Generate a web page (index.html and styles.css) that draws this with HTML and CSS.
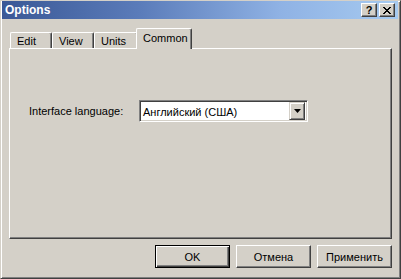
FILE: index.html
```html
<!DOCTYPE html>
<html lang="en">

<head>
    <meta charset="UTF-8">
    <meta name="viewport" content="width=device-width, initial-scale=1.0">
    <title>Options</title>
    <link rel="stylesheet" href="styles.css">
</head>

<body>
    <div class="window">
        <div class="titlebar">
            <span class="title">Options</span>
            <div class="caption-btns">
                <button class="cap">?</button>
                <button class="cap">
                    <svg width="8" height="7" viewBox="0 0 8 7">
                        <path d="M0 0h2v1h1v1h2v-1h1v-1h2v1h-1v1h-1v1h-1v1h1v1h1v1h1v1h-2v-1h-1v-1h-2v1h-1v1h-2v-1h1v-1h1v-1h1v-1h-1v-1h-1v-1h-1z" fill="#000"/>
                    </svg>
                </button>
            </div>
        </div>

        <div class="content">
            <div class="tabs">
                <div class="tab">Edit</div>
                <div class="tab">View</div>
                <div class="tab wide">Units</div>
                <div class="tab active">Common</div>
            </div>

            <div class="panel">
                <div class="row">
                    <label class="label">Interface language:</label>
                    <div class="combo">
                        <span class="combo-text">Английский (США)</span>
                        <span class="drop">
                            <svg width="7" height="4" viewBox="0 0 7 4">
                                <path d="M0 0h7l-3.5 4z" fill="#000"/>
                            </svg>
                        </span>
                    </div>
                </div>
            </div>

            <div class="buttons">
                <button class="btn default">OK</button>
                <button class="btn">Отмена</button>
                <button class="btn">Применить</button>
            </div>
        </div>
    </div>
</body>

</html>
```

FILE: styles.css
```css
body {
    margin: 0;
    background-color: #d4d0c8;
    font-family: "Liberation Sans", Arial, sans-serif;
    font-size: 11px;
    color: #000;
}

.window {
    width: 401px;
    height: 279px;
    box-sizing: border-box;
    background-color: #d4d0c8;
    border-top: 1px solid #d4d0c8;
    border-left: 1px solid #d4d0c8;
    border-right: 1px solid #404040;
    border-bottom: 1px solid #404040;
    box-shadow: inset 1px 1px #fff, inset -1px -1px #808080;
    padding: 0 2px 2px 1px;
    display: flex;
    flex-direction: column;
}

.titlebar {
    height: 18px;
    display: flex;
    align-items: center;
    justify-content: space-between;
    background: linear-gradient(to right, #3a5896, #5b7cba 35%, #8fb2e4 70%, #a6caf0);
    padding: 0 3px 0 3px;
}

.title {
    color: #fff;
    font-weight: bold;
    font-size: 12px;
    font-family: "Liberation Sans", sans-serif;
}

.caption-btns {
    display: flex;
    gap: 2px;
}

.cap {
    width: 16px;
    height: 14px;
    padding: 0;
    margin: 0;
    background-color: #d4d0c8;
    border-top: 1px solid #fff;
    border-left: 1px solid #fff;
    border-right: 1px solid #404040;
    border-bottom: 1px solid #404040;
    box-shadow: inset -1px -1px #808080;
    font-family: "Liberation Sans", sans-serif;
    font-weight: bold;
    font-size: 11px;
    line-height: 11px;
    display: flex;
    align-items: center;
    justify-content: center;
}

.content {
    flex: 1;
    padding: 9px 6px 0 7px;
    display: flex;
    flex-direction: column;
}

.tabs {
    display: flex;
    align-items: flex-end;
    padding-left: 1px;
    position: relative;
    z-index: 1;
}

.tab {
    width: 42px;
    height: 16px;
    box-sizing: border-box;
    padding: 0 0 0 6px;
    border-top: 1px solid #fff;
    border-left: 1px solid #fff;
    border-right: 1px solid #404040;
    box-shadow: inset -1px 0 #808080;
    border-radius: 2px 2px 0 0;
    display: flex;
    align-items: center;
    background-color: #d4d0c8;
}

.tab.wide {
    width: 44px;
}

.tab.active {
    width: 56px;
    height: 21px;
    margin: 0 0 -1px -2px;
    padding: 3px 0 0 6px;
    align-items: flex-start;
}

.panel {
    height: 191px;
    box-sizing: border-box;
    border-top: 1px solid #fff;
    border-left: 1px solid #fff;
    border-right: 1px solid #404040;
    border-bottom: 1px solid #404040;
    box-shadow: inset -1px -1px #808080;
    padding: 51px 0 0 19px;
}

.row {
    display: flex;
    align-items: center;
    gap: 19px;
}

.label {
    width: 91px;
    white-space: nowrap;
}

.combo {
    width: 169px;
    height: 22px;
    box-sizing: border-box;
    background-color: #fff;
    border-top: 1px solid #808080;
    border-left: 1px solid #808080;
    border-right: 1px solid #fff;
    border-bottom: 1px solid #fff;
    box-shadow: inset 1px 1px #404040, inset -1px -1px #d4d0c8;
    display: flex;
    align-items: center;
    justify-content: space-between;
    padding: 2px 2px 2px 3px;
}

.combo-text {
    padding-top: 1px;
}

.drop {
    width: 16px;
    height: 18px;
    box-sizing: border-box;
    background-color: #d4d0c8;
    border-top: 1px solid #d4d0c8;
    border-left: 1px solid #d4d0c8;
    border-right: 1px solid #404040;
    border-bottom: 1px solid #404040;
    box-shadow: inset 1px 1px #fff, inset -1px -1px #808080;
    display: flex;
    align-items: center;
    justify-content: center;
}

.buttons {
    display: flex;
    justify-content: flex-end;
    gap: 6px;
    padding-top: 6px;
}

.btn {
    width: 75px;
    height: 23px;
    padding: 0;
    margin: 0;
    font-family: "Liberation Sans", sans-serif;
    font-size: 11px;
    color: #000;
    background-color: #d4d0c8;
    border-top: 1px solid #fff;
    border-left: 1px solid #fff;
    border-right: 1px solid #404040;
    border-bottom: 1px solid #404040;
    box-shadow: inset -1px -1px #808080;
}

.btn.default {
    border: 1px solid #000;
    box-shadow: inset 1px 1px #fff, inset -1px -1px #404040, inset -2px -2px #808080;
}
```
